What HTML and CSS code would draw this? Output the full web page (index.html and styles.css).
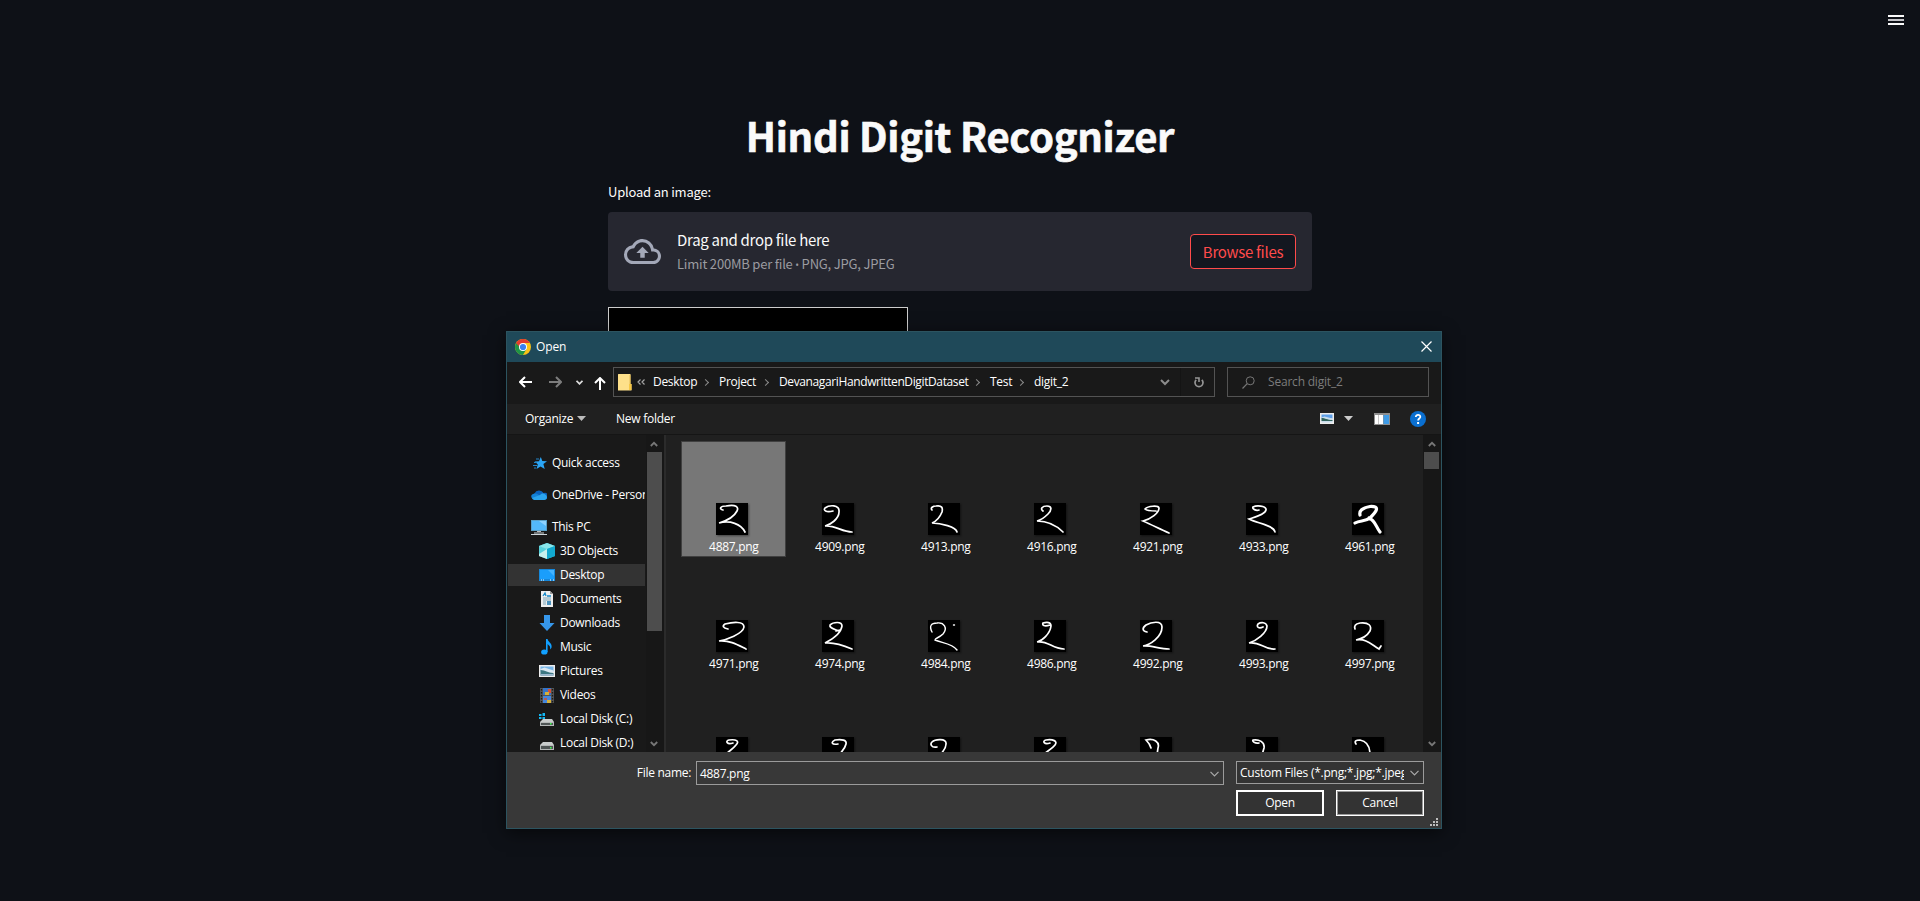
FILE: index.html
```html
<!DOCTYPE html>
<html lang="en">
<head>
<meta charset="utf-8">
<title>Hindi Digit Recognizer</title>
<link rel="stylesheet" href="styles.css">
</head>
<body>
<header class="topbar">
  <svg class="menu" width="16" height="10" viewBox="0 0 16 10"><path d="M0 1h16M0 9h16" stroke="#fafafa" stroke-width="2"/><path d="M0 5h16" stroke="#c4c4c8" stroke-width="2"/></svg>
</header>
<main class="page">
  <h1 class="title">Hindi Digit Recognizer</h1>
  <p class="label">Upload an image:</p>
  <section class="dropzone">
    <svg class="cloud" width="37" height="25" viewBox="0 4 24 16" preserveAspectRatio="none"><path fill="#a3a8b8" d="M19.35 10.04A7.49 7.49 0 0 0 12 4C9.11 4 6.6 5.64 5.35 8.04A5.994 5.994 0 0 0 0 14c0 3.31 2.69 6 6 6h13c2.76 0 5-2.24 5-5 0-2.64-2.05-4.78-4.65-4.96zM19 18H6c-2.21 0-4-1.79-4-4 0-2.05 1.53-3.76 3.56-3.97l1.07-.11.5-.95A5.469 5.469 0 0 1 12 6c2.62 0 4.88 1.86 5.39 4.43l.3 1.5 1.53.11A2.98 2.98 0 0 1 22 15c0 1.65-1.35 3-3 3zM8 13h2.55v3h2.9v-3H16l-4-4z"/></svg>
    <div class="drop-text">
      <span class="drop-main">Drag and drop file here</span>
      <span class="drop-limit">Limit 200MB per file <span class="bullet">•</span> PNG, JPG, JPEG</span>
    </div>
    <button class="browse">Browse files</button>
  </section>
  <div class="canvas"></div>
</main>

<div class="dialog">
  <div class="titlebar">
    <svg width="16" height="16" viewBox="0 0 16 16"><circle cx="8" cy="8" r="8" fill="#fbc116"/><path d="M8 8L1.1 4A8 8 0 0 0 8 16l3.5-6z" fill="#1e9447"/><path d="M1.1 4A8 8 0 0 1 14.9 4H8v4H4.5z" fill="#e33b2e"/><circle cx="8" cy="8" r="4" fill="#fff"/><circle cx="8" cy="8" r="3.1" fill="#3a7ff0"/></svg>
    <span class="caption">Open</span>
    <svg class="close" width="11" height="11" viewBox="0 0 11 11"><path d="M.5.5l10 10M10.500.5l-10 10" stroke="#fff" stroke-width="1.2"/></svg>
  </div>

  <div class="navbar">
    <div class="arrows">
      <svg width="13" height="12" viewBox="0 0 13 12"><path d="M13 6H1.500M6 1L1 6l5 5" fill="none" stroke="#fff" stroke-width="2"/></svg>
      <svg class="fwd" width="13" height="12" viewBox="0 0 13 12"><path d="M0 6h11.500M7 1l5 5-5 5" fill="none" stroke="#7d7d7d" stroke-width="2"/></svg>
      <svg class="recent" width="7" height="5" viewBox="0 0 7 5"><path d="M.5.8l3 3 3-3" fill="none" stroke="#ddd" stroke-width="1.8"/></svg>
      <svg class="up" width="12" height="13" viewBox="0 0 12 13"><path d="M6 13V1.500M1 6l5-5 5 5" fill="none" stroke="#fff" stroke-width="2"/></svg>
    </div>
    <div class="address">
      <svg class="folder" width="14" height="17" viewBox="0 0 14 17"><path d="M.5.5h11v15H.5z" fill="#ffe394"/><path d="M.5 0h12v10h1v6.500H0V.5z" fill="#fee08a"/><path d="M11 10h2.500v6H11z" fill="#f6c643"/><path d="M12 1v9" stroke="#e6bd54"/></svg>
      <svg class="more" width="8" height="6" viewBox="0 0 8 6"><path d="M3.500.5L1 3l2.500 2.500M7.500.5L5 3l2.500 2.500" fill="none" stroke="#a5a5a5" stroke-width="1.200"/></svg>
      <span class="c1">Desktop</span><i class="sep"></i>
      <span class="c2">Project</span><i class="sep"></i>
      <span class="c3">DevanagariHandwrittenDigitDataset</span><i class="sep"></i>
      <span class="c4">Test</span><i class="sep"></i>
      <span class="c5">digit_2</span>
      <svg class="addr-down" width="10" height="7" viewBox="0 0 10 7"><path d="M1 1l4 4 4-4" fill="none" stroke="#8c8c8c" stroke-width="2"/></svg>
      <div class="refresh"><svg width="10" height="11" viewBox="0 0 10 11"><path d="M7.800 2.800A4 4 0 1 1 2.200 2.800" fill="none" stroke="#959595" stroke-width="1.700"/><path d="M1 1h4v4" fill="none" stroke="#959595" stroke-width="1.600"/></svg></div>
    </div>
    <div class="search">
      <svg width="13" height="13" viewBox="0 0 13 13"><circle cx="8.200" cy="4.800" r="4" fill="none" stroke="#777"/><path d="M5.200 7.700L.5 12.500" stroke="#777" stroke-width="1.200"/></svg>
      <span>Search digit_2</span>
    </div>
  </div>

  <div class="toolbar">
    <span class="organize">Organize</span>
    <svg class="tri" width="9" height="5" viewBox="0 0 9 5"><path d="M0 0h9L4.500 5z" fill="#bbb"/></svg>
    <span class="newfolder">New folder</span>
    <svg class="view" width="14" height="11" viewBox="0 0 14 11"><path d="M0 0h14v11H0z" fill="#ededed"/><path d="M1.500 1.500h11v4h-11z" fill="#5e9fe8"/><path d="M1.500 4.500l3-1 8 2v4h-11z" fill="#c8dcec"/><path d="M1.500 5c4 0 5 2 11 2v1h-11z" fill="#31645c"/></svg>
    <svg class="tri2" width="9" height="5" viewBox="0 0 9 5"><path d="M0 0h9L4.500 5z" fill="#ccc"/></svg>
    <svg class="pane" width="16" height="12" viewBox="0 0 16 12"><path d="M0 0h16v12H0z" fill="#8f8f8f"/><path d="M1 2h3.500v9H1zM5 2h4v9H5z" fill="#fff"/><path d="M9.500 2H15v9H9.500z" fill="#3f9be6"/></svg>
    <svg class="help" width="16" height="16" viewBox="0 0 16 16"><circle cx="8" cy="8" r="8" fill="#0a6fd0"/><path d="M5.800 6C5.800 3 10.500 3.200 10.300 6c-.1 1.500-2.200 1.600-2.200 3.400" fill="none" stroke="#fff" stroke-width="1.800"/><path d="M7.100 11h2v2h-2z" fill="#fff"/></svg>
  </div>

  <div class="content">
    <nav class="side">
      <div class="item root"><svg width="16" height="16" viewBox="0 0 16 16"><path d="M9.800 2l1.500 4 4.700.2-3.600 2.900 1.300 5-4.200-2.700L5.500 14l1.300-4.700L3.500 6.500l4.500-.3z" fill="#2ba5f5"/><path d="M5 4h3M3 7.500h3M2 10.500h4M3 13h2" stroke="#2385c9"/></svg><span>Quick access</span></div>
      <div class="item root"><svg width="16" height="16" viewBox="0 0 16 16"><path d="M3 12a3.300 3.300 0 0 1 .5-5.500 5 5 0 0 1 9-.5A3 3 0 0 1 15 12z" fill="#0c63bd"/><path d="M2 12C-1 10 0 7 3.500 6.500c3 0 5 2 8 4z" fill="#1483d8"/><path d="M3 13a3 3 0 0 1-2-2l8-3c2-3 6-1.500 7 2 0 2-1 3-2.500 3z" fill="#2ba4ee"/></svg><span>OneDrive - Person</span></div>
      <div class="item root"><svg width="16" height="16" viewBox="0 0 16 16"><path d="M0 1h16v11H0z" fill="#5aa0c8"/><path d="M1 2h14v9H1z" fill="#53b8fa"/><path d="M8 2h7v5z" fill="#8dd2ff"/><path d="M6 12h4v1H6z" fill="#bbb"/><path d="M3 13.500h10v1H3zM0 15h16v1H0z" fill="#cdd5da"/></svg><span>This PC</span></div>
      <div class="item"><svg width="16" height="16" viewBox="0 0 16 16"><path d="M8 0l8 3v10l-8 3-8-3V3z" fill="#2cc0d4"/><path d="M8 0l8 3-8 3-8-3z" fill="#8ae6ea"/><path d="M0 3l8 3v10l-8-3z" fill="#c8f1ee"/><path d="M0 3l8 3-8 5z" fill="#58d2dc"/><path d="M8 6l8-3v10l-8 3z" fill="#12a9cf"/></svg><span>3D Objects</span></div>
      <div class="item on"><svg width="16" height="16" viewBox="0 0 16 16"><path d="M0 2h16v12H0z" fill="#1588dc"/><path d="M1 3h14v9H1z" fill="#1a9efc"/><path d="M9 3h6v6z" fill="#45b3ff"/><path d="M2 13h1M4 13h1M11 13h1M14 13h1" stroke="#fff"/></svg><span>Desktop</span></div>
      <div class="item"><svg width="16" height="16" viewBox="0 0 16 16"><path d="M2 0h9l3 3v13H2z" fill="#eee"/><path d="M11 0v3h3z" fill="#999"/><path d="M4 7h8M4 9h8M4 11h3M4 13h3" stroke="#7da5b8"/><path d="M4 5l2-3 1 3M8 5h4" fill="none" stroke="#1688c8" stroke-width="1.300"/><path d="M8 10h4v4H8z" fill="#4b92bd"/></svg><span>Documents</span></div>
      <div class="item"><svg width="16" height="16" viewBox="0 0 16 16"><path d="M5 0h6v8h4.500L8 16 .5 8H5z" fill="#3697eb"/></svg><span>Downloads</span></div>
      <div class="item"><svg width="16" height="16" viewBox="0 0 16 16"><ellipse cx="5.300" cy="13" rx="3.200" ry="2.600" fill="#11a0ff"/><path d="M7 0h1.600c.3 3 4.600 4 4 8-.2 1.400-1 2-1.600 2.500C12 6.500 9 6 8.600 5v8H7z" fill="#11a0ff"/></svg><span>Music</span></div>
      <div class="item"><svg width="16" height="16" viewBox="0 0 16 16"><path d="M0 2h16v12H0z" fill="#ededed"/><path d="M1.500 3.500h13v5h-13z" fill="#75b5e8"/><path d="M1.500 6l4-1.500 9 3v2h-13z" fill="#d9e8f2"/><path d="M1.500 7c5 0 7 3 13 3v2.500h-13z" fill="#3c7782"/><path d="M1.500 11h13v1.500h-13z" fill="#9bb7d0"/></svg><span>Pictures</span></div>
      <div class="item"><svg width="16" height="16" viewBox="0 0 16 16"><path d="M1 1h14v15H1z" fill="#545454"/><path d="M4 1h8v7H4z" fill="#3675c8"/><path d="M4 9h8v7H4z" fill="#4587dd"/><path d="M2.500 2v14M13.500 2v14" stroke="#191919" stroke-width="1.300" stroke-dasharray="1.500 1.500"/><path d="M9 2h3v4H9z" fill="#d94f32"/><path d="M6 5h4v3H6zM8 13h4v3H8z" fill="#d5b13a"/><path d="M5 11h3v2H5z" fill="#b75b53"/></svg><span>Videos</span></div>
      <div class="item"><svg width="16" height="16" viewBox="0 0 16 16"><path d="M0 3h2.500v2H0zM3.500 2H6v3H3.500zM0 6h2.500v2H0zM3.500 6H6v2H3.500z" fill="#12b7f3"/><path d="M4 8h9l2 3H1z" fill="#c9cccc"/><path d="M1 11h14v4H1z" fill="#b4b7b7"/><path d="M2 12h12v2H2z" fill="#4f5555"/><path d="M11 12h1.500v1.500H11z" fill="#3cff4c"/></svg><span>Local Disk (C:)</span></div>
      <div class="item"><svg width="16" height="16" viewBox="0 0 16 16"><path d="M4 7h9l2 3H1z" fill="#c9cccc"/><path d="M1 10h14v5H1z" fill="#b4b7b7"/><path d="M2 11h12v3H2z" fill="#4f5555"/><path d="M11 12h1.500v1.500H11z" fill="#3cff4c"/></svg><span>Local Disk (D:)</span></div>
    </nav>
    <div class="scroll">
      <svg width="8" height="6" viewBox="0 0 8 6"><path d="M.8 5L4 1.800 7.200 5" fill="none" stroke="#777" stroke-width="1.800"/></svg>
      <div class="thumb long"></div>
      <svg class="bottom" width="8" height="6" viewBox="0 0 8 6"><path d="M.8 1L4 4.200 7.200 1" fill="none" stroke="#777" stroke-width="1.800"/></svg>
    </div>
    <div class="divider"></div>
    <div class="files">
      <div class="file picked"><svg viewBox="0 0 32 32"><path d="M7 7C3 6 4 3 10 3C20 1 23 4 21 8C18 14 10 18 3 20C14 17 25 21 29 29"/></svg><span>4887.png</span></div>
      <div class="file"><svg viewBox="0 0 32 32"><path d="M11 8C4 10 1 7 3 5C7 2 18 1 17 9C17 16 8 22 3 23C13 22 20 29 30 29"/></svg><span>4909.png</span></div>
      <div class="file"><svg viewBox="0 0 32 32"><path d="M4 7C2 5 5 3 8 3C14 2 15 5 14 9C12 14 9 18 4 20C13 20 28 24 29 29"/></svg><span>4913.png</span></div>
      <div class="file"><svg viewBox="0 0 32 32"><path d="M9 8C6 6 8 3 13 3C18 3 18 7 14 11C10 15 7 17 3 18C15 18 24 24 29 29"/></svg><span>4916.png</span></div>
      <div class="file"><svg viewBox="0 0 32 32"><path d="M16 8C10 8 6 7 5 6C8 3 18 2 19 5C19 10 11 16 3 18C12 22 20 26 29 30"/></svg><span>4921.png</span></div>
      <div class="file"><svg viewBox="0 0 32 32"><path d="M13 7C10 8 6 6 7 4C11 2 19 3 20 6C21 11 9 14 3 16C10 20 28 22 29 29"/></svg><span>4933.png</span></div>
      <div class="file"><svg class="bold" viewBox="0 0 32 32"><path d="M8 12C7 8 10 5 18 3.500C29 3 24 9 18 15C13 19 8 17 3 20M17 15C23 17 24 24 28 29"/></svg><span>4961.png</span></div>
      <div class="file"><svg viewBox="0 0 32 32"><path d="M12 9C7 8 6 6 9 4C17 2 28 1 28 7C27 14 10 20 3 21C14 20 22 25 30 29"/></svg><span>4971.png</span></div>
      <div class="file"><svg viewBox="0 0 32 32"><path d="M17 11C12 9 7 8 8 5C11 2 20 1 20 6C19 14 9 20 3 23C12 22 23 26 30 29M14 11l4-1"/></svg><span>4974.png</span></div>
      <div class="file"><svg class="thin" viewBox="0 0 32 32"><path d="M4 12C1 6 3 3 9 3C16 2 20 8 15 14C11 18 7 18 7 20C13 23 24 23 29 30M25.500 5h1"/></svg><span>4984.png</span></div>
      <div class="file"><svg viewBox="0 0 32 32"><path d="M16 5C10 7 8 5 9 3C13 2 17 2 17 6C16 14 8 21 3 22C14 20 18 29 30 29"/></svg><span>4986.png</span></div>
      <div class="file"><svg viewBox="0 0 32 32"><path d="M7 12C2 11 2 8 6 5C11 2 22 0 22 7C22 17 10 25 3 26C10 25 20 29 29 29"/></svg><span>4992.png</span></div>
      <div class="file"><svg viewBox="0 0 32 32"><path d="M17 7C13 9 10 7 12 4C15 2 20 2 21 6C21 13 10 21 3 23C14 21 18 30 29 29"/></svg><span>4993.png</span></div>
      <div class="file"><svg viewBox="0 0 32 32"><path d="M3 9C2 6 3 4 8 3C17 2 20 6 18 11C15 16 9 19 4 20C14 18 20 25 27 29L29 26"/></svg><span>4997.png</span></div>
      <div class="file"><svg viewBox="0 0 32 32"><path d="M17 6C11 8 9 4 13 3C20 2 24 4 20 8C17 12 13 14 9 18"/></svg></div>
      <div class="file"><svg viewBox="0 0 32 32"><path d="M16 7C9 8 9 5 13 3C20 2 25 3 24 7C23 12 20 14 17 18"/></svg></div>
      <div class="file"><svg viewBox="0 0 32 32"><path d="M9 10C3 11 2 7 4 5C7 2 19 1 18 7C18 12 15 14 12 18"/></svg></div>
      <div class="file"><svg viewBox="0 0 32 32"><path d="M16 6C10 8 8 4 12 3C19 2 24 4 21 8C18 12 13 14 9 18"/></svg></div>
      <div class="file"><svg viewBox="0 0 32 32"><path d="M11 11C10 7 8 5 6 3C14 1 20 5 18 11L17 18"/></svg></div>
      <div class="file"><svg viewBox="0 0 32 32"><path d="M13 6C9 7 6 4 7 3C13 2 19 5 18 11L16 18"/></svg></div>
      <div class="file"><svg viewBox="0 0 32 32"><path d="M4 7C2 4 4 3 8 3C14 4 18 9 18 18"/></svg></div>
    </div>
    <div class="scroll">
      <svg width="8" height="6" viewBox="0 0 8 6"><path d="M.8 5L4 1.800 7.200 5" fill="none" stroke="#777" stroke-width="1.800"/></svg>
      <div class="thumb"></div>
      <svg class="bottom" width="8" height="6" viewBox="0 0 8 6"><path d="M.8 1L4 4.200 7.200 1" fill="none" stroke="#777" stroke-width="1.800"/></svg>
    </div>
  </div>

  <div class="footer">
    <span class="fn">File name:</span>
    <div class="field name"><span>4887.png</span><svg width="9" height="6" viewBox="0 0 9 6"><path d="M.5.8l4 4 4-4" fill="none" stroke="#aaa" stroke-width="1.200"/></svg></div>
    <div class="right">
      <div class="field type"><span>Custom Files (*.png;*.jpg;*.jpeg</span><svg width="9" height="6" viewBox="0 0 9 6"><path d="M.5.8l4 4 4-4" fill="none" stroke="#aaa" stroke-width="1.200"/></svg></div>
      <div class="buttons"><button class="btn primary">Open</button><button class="btn">Cancel</button></div>
    </div>
    <svg class="grip" width="8" height="8" viewBox="0 0 8 8"><path d="M6 0h2v2H6zM3 3h2v2H3zM6 3h2v2H6zM0 6h2v2H0zM3 6h2v2H3zM6 6h2v2H6z" fill="#bdbdbd"/></svg>
  </div>
</div>
</body>
</html>
```
FILE: styles.css
```css
* { box-sizing: border-box; }
body {
  margin: 0;
  height: 901px;
  overflow: hidden;
  background: #0e1117;
  color: #fafafa;
  font-family: "Noto Sans CJK SC", "Noto Sans", sans-serif;
}
svg { display: block; flex: none; }
button { font: inherit; padding: 0; }

/* Page */
.topbar { height: 46px; display: flex; justify-content: flex-end; padding: 15px 16px 0; }
.page { width: 704px; margin: 0 auto; padding-top: 53px; }
.title { margin: 0; height: 72px; line-height: 72px; font-size: 40px; font-weight: 700; letter-spacing: -0.3px; text-align: center; white-space: nowrap; -webkit-text-stroke: .6px #fafafa; }
.label { margin: 10px 0 9px; height: 22px; line-height: 22px; font-size: 13px; letter-spacing: -0.2px; }
.dropzone {
  height: 79px; padding: 0 16px; display: flex; align-items: center;
  background: #262730; border-radius: 4px;
}
.drop-text { margin-left: 16px; flex: 1; display: flex; flex-direction: column; }
.drop-main { font-size: 15px; line-height: 24px; letter-spacing: -0.3px; }
.drop-limit { font-size: 13px; line-height: 24px; letter-spacing: -0.2px; color: #9b9ba0; }
.bullet { font-family: "Open Sans", sans-serif; font-size: 10px; line-height: 1; }
.browse {
  width: 106px; height: 35px; border: 1px solid #ff4b4b; border-radius: 4px;
  background: #131720; color: #ff4b4b; font-size: 15px; letter-spacing: -0.3px;
}
.canvas { margin-top: 16px; width: 300px; height: 300px; background: #000; border: 1px solid #ccc; }

/* File dialog window */
.dialog {
  position: absolute; left: 506px; top: 331px; width: 936px; height: 498px;
  display: flex; flex-direction: column;
  border: 1px solid #2c5460; background: #202020;
  box-shadow: 0 4px 16px rgba(0, 0, 0, .55);
  font-family: "Open Sans", "Noto Sans", sans-serif;
  font-size: 12px; letter-spacing: -0.3px; line-height: 16px; color: #fff; white-space: nowrap;
}
.titlebar { height: 30px; padding: 0 9px 1px 8px; display: flex; align-items: center; background: #1f4959; }
.caption { margin-left: 5px; padding-top: 1px; letter-spacing: -0.1px; }
.close { margin-left: auto; }
.navbar { height: 42px; display: flex; align-items: center; background: #191919; }
.arrows { width: 106px; margin-bottom: 2px; padding-left: 12px; display: flex; align-items: center; }
.fwd { margin-left: 17px; }
.recent { margin-left: 14px; }
.up { margin-left: 11px; margin-top: 2px; }
.address { width: 602px; height: 30px; margin-bottom: 2px; padding-left: 4px; display: flex; align-items: center; border: 1px solid #535353; }
.address span { flex: none; }
.more { margin-left: 5px; margin-right: 8px; }
.sep { width: 5px; height: 5px; flex: none; border: solid #8a8a8a; border-width: 1.5px 1.5px 0 0; transform: rotate(45deg); margin: 0 11px 0 7px; }
.c1 { width: 43px; }
.c2 { width: 37px; }
.c3 { width: 188px; letter-spacing: -0.38px; }
.c4 { width: 21px; }
.addr-down { margin-left: auto; margin-right: 10px; }
.refresh { width: 34px; height: 28px; padding-left: 2px; display: flex; align-items: center; justify-content: center; border-left: 1px solid #141414; }
.search { width: 202px; height: 30px; margin: 0 0 2px 12px; padding-left: 14px; display: flex; align-items: center; gap: 13px; border: 1px solid #535353; color: #7c7c7c; letter-spacing: -0.2px; }
.toolbar { height: 31px; padding: 0 15px 1px 18px; display: flex; align-items: center; border-bottom: 1px solid #151515; letter-spacing: -0.25px; }
.organize { width: 47px; }
.tri { margin-left: 5px; }
.newfolder { margin-left: 30px; }
.view { margin-left: auto; }
.tri2 { margin-left: 10px; }
.pane { margin-left: 21px; }
.help { margin-left: 20px; }

.content { height: 317px; display: flex; overflow: hidden; }
.side { width: 139px; padding-top: 12px; overflow: hidden; background: #191919; }
.item { height: 22px; margin: 0 0 2px 1px; width: 137px; padding-left: 31px; display: flex; align-items: center; gap: 5px; overflow: hidden; }
.item.root { height: 32px; margin-bottom: 0; padding-left: 23px; }
.item.root:nth-child(3) { margin-bottom: -3px; }
.item.on { background: #333; }
.scroll { width: 18px; padding: 6px 1px 5px 0; display: flex; flex-direction: column; align-items: center; background: #171717; }
.thumb { width: 15px; height: 17px; margin-top: 5px; background: #4d4d4d; }
.thumb.long { height: 179px; }
.bottom { margin-top: auto; }
.divider { width: 2px; background: #2b2b2b; }
.files {
  width: 758px; padding: 6px 0 0 15px; overflow: hidden;
  display: grid; grid-template-columns: repeat(7, 105px); grid-auto-rows: 116px; gap: 1px;
}
.file { height: 116px; padding-top: 61px; display: flex; flex-direction: column; align-items: center; border: 1px solid transparent; }
.file svg { width: 32px; height: 32px; margin-right: 3px; background: #000; fill: none; stroke: #fff; stroke-width: 1.7; stroke-linecap: round; box-shadow: 1px 1px 2px rgba(0, 0, 0, .45); }
.file .bold { stroke-width: 3.2; }
.file .thin { stroke-width: 1.4; }
.file span { margin-top: 4px; margin-left: 1px; }
.picked { background: #777; border-color: #404040; }

.footer { flex: 1; padding-top: 9px; display: flex; align-items: flex-start; background: #383838; position: relative; }
.fn { width: 189px; padding-right: 5px; text-align: right; line-height: 23px; }
.field { display: flex; align-items: center; border: 1px solid #9b9b9b; }
.name { width: 528px; height: 24px; padding: 1px 4px 0 3px; justify-content: space-between; background: #383838; }
.right { width: 188px; margin-left: 12px; }
.type { height: 23px; padding: 0 4px 0 3px; background: #333; justify-content: space-between; letter-spacing: -0.25px; }
.type span { width: 164px; overflow: hidden; }
.buttons { margin-top: 6px; display: flex; justify-content: space-between; }
.btn { width: 88px; height: 26px; border: 1px solid #fff; outline: 1px solid #999; outline-offset: -2px; background: #333; color: #fff; letter-spacing: inherit; }
.primary { border-width: 2px; outline: 0; }
.grip { position: absolute; right: 3px; bottom: 2px; }
```
